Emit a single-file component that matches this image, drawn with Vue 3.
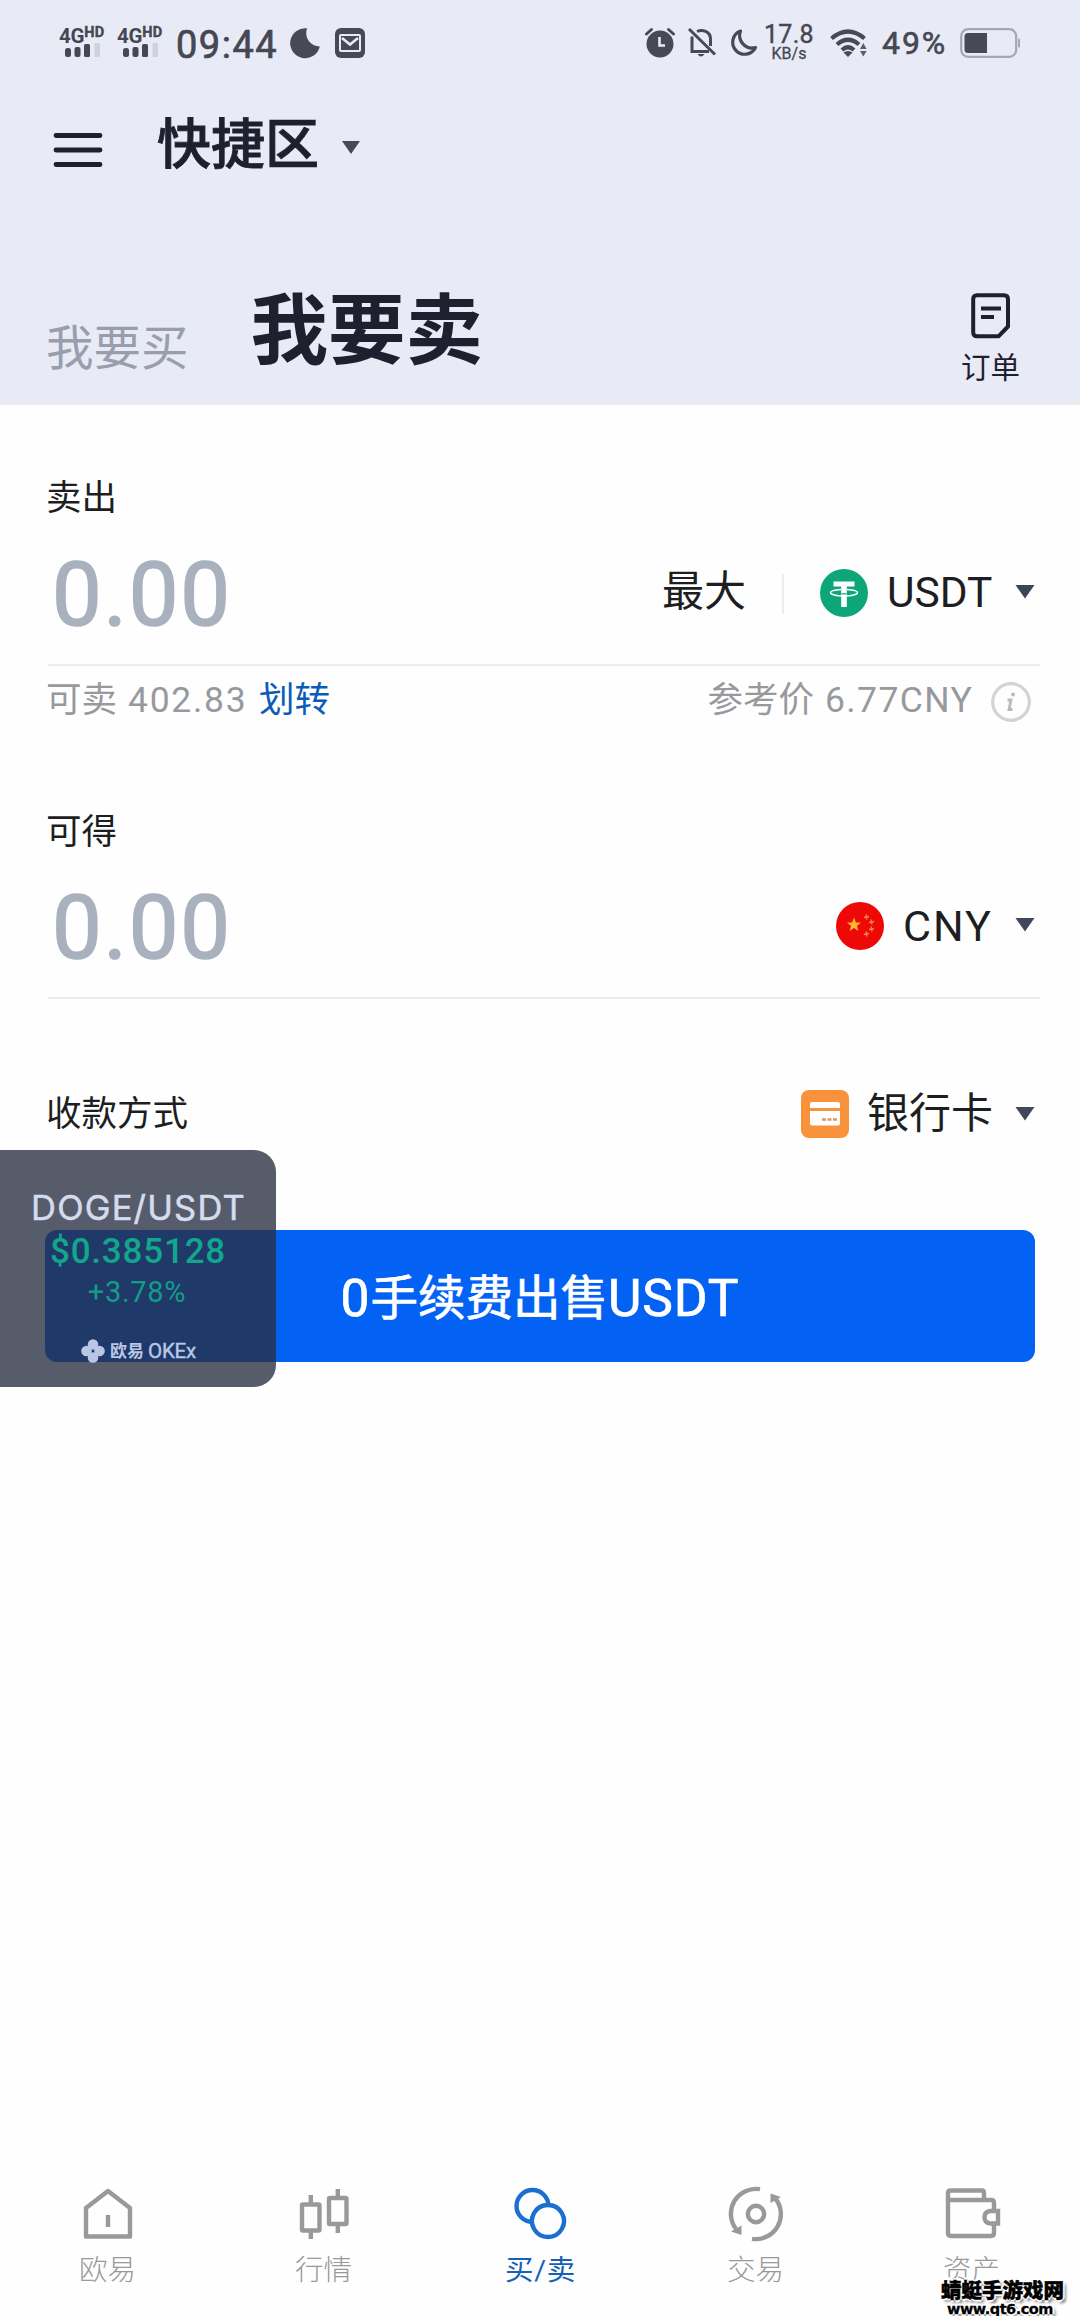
<script setup>
const sims = [1, 2]
const tabs = [
  { id: 'home', label: '欧易' },
  { id: 'market', label: '行情' },
  { id: 'otc', label: '买/卖', active: true },
  { id: 'trade', label: '交易' },
  { id: 'assets', label: '资产' },
]
const petals = [[12, 5.5], [5.5, 12], [18.5, 12], [12, 18.5]]
</script>

<template>
  <div class="screen">
    <header class="header">
      <div class="status">
        <div v-for="s in sims" :key="s" class="sim">
          <div class="net"><b>4G</b><i>HD</i></div>
          <svg width="36" height="15" viewBox="0 0 36 15">
            <rect x="0" y="5" width="6" height="9" rx="2.5" fill="#454752" />
            <rect x="9.5" y="4" width="6" height="10" rx="2" fill="#454752" />
            <rect x="19" y="1" width="6" height="13" rx="1.5" fill="#454752" />
            <rect x="29.500" y="0" width="5.500" height="14" rx="1" fill="#cfd1db" />
          </svg>
        </div>
        <span class="time">09:44</span>
        <svg class="s-moon" width="30" height="30" viewBox="0 0 30 30">
          <path d="M17 0.300A13.500 13.500 0 0 0 29.800 18.500A15 15 0 1 1 17 0.300Z" fill="#474955" />
        </svg>
        <svg class="s-mail" width="30" height="30" viewBox="0 0 30 30">
          <rect width="30" height="30" rx="6" fill="#474955" />
          <rect x="5" y="7" width="20" height="16" rx="1" fill="none" stroke="#e8ebf6" stroke-width="2" />
          <path d="M7 10l8 6.500L23 10" fill="none" stroke="#e8ebf6" stroke-width="2.600" />
        </svg>
        <span class="grow"></span>
        <svg width="30" height="30" viewBox="0 0 30 30">
          <circle cx="15" cy="16" r="13.500" fill="#474955" />
          <path d="M1.500 6L6.500 1.500M28.500 6L23.500 1.500" stroke="#474955" stroke-width="3" stroke-linecap="round" />
          <path d="M14.500 9v8.500h5.500" fill="none" stroke="#e8ebf6" stroke-width="2.600" />
        </svg>
        <svg class="s-bell" width="28" height="30" viewBox="0 0 28 30">
          <path d="M4 8.500V23.500H21M9 3.500C14 1 22.500 3 22.500 11V18M1 1L27 26.500" fill="none" stroke="#474955" stroke-width="3" />
          <path d="M9.500 26h7q-3.500 5-7 0Z" fill="#474955" />
        </svg>
        <svg class="s-moon2" width="29" height="28" viewBox="0 0 29 28">
          <path d="M11.500 2A12 12 0 1 0 26.500 18.500A12.500 12.500 0 0 1 11.500 2Z" fill="none" stroke="#474955" stroke-width="3.200" stroke-linejoin="round" />
        </svg>
        <div class="speed"><span>17.8</span><small>KB/s</small></div>
        <svg class="s-wifi" width="38" height="28" viewBox="0 0 38 28">
          <g fill="none" stroke="#474955" stroke-width="4.200">
            <path d="M1.500 9.500Q18 -4.500 34.500 9.500" />
            <path d="M7 15.500Q18 6 29 15.500" />
            <path d="M12 21Q18 15.500 24 21" />
          </g>
          <path d="M13.500 23.500Q18 20.500 22.500 23.500L18 28Z" fill="#474955" />
          <path d="M30 20l3.300-6 3.300 6ZM30 22l3.300 5.500 3.300-5.500Z" fill="#5b5d68" />
        </svg>
        <span class="percent">49%</span>
        <svg class="s-batt" width="60" height="30" viewBox="0 0 60 30">
          <rect x="1.200" y="1.200" width="55" height="27.600" rx="7" fill="none" stroke="#a4a6b0" stroke-width="2.200" />
          <path d="M8 5H27V25H8Q4.500 25 4.500 21.500V8.500Q4.500 5 8 5Z" fill="#474955" />
          <rect x="58" y="10.500" width="2" height="9" rx="1" fill="#a4a6b0" />
        </svg>
      </div>

      <div class="title-row">
        <svg width="48" height="36" viewBox="0 0 48 36">
          <path d="M2 3.500H46M2 18H46M2 32.500H46" stroke="#1e2030" stroke-width="4.800" stroke-linecap="round" />
        </svg>
        <h1>快捷区</h1>
        <svg width="20" height="15" viewBox="0 0 20 15"><path d="M1 1h18l-9 13Z" fill="#454959" /></svg>
      </div>

      <div class="sides">
        <span class="buy">我要买</span>
        <span class="sell">我要卖</span>
        <span class="grow"></span>
        <div class="orders">
          <svg width="40" height="46" viewBox="0 0 40 46">
            <path d="M6 2.200H33Q37 2.200 37 6.200V33.500L27.500 43.300H6Q2.200 43.300 2.200 39.500V6Q2.200 2.200 6 2.200Z" fill="none" stroke="#1e2030" stroke-width="4" stroke-linejoin="round" />
            <path d="M10 15.500H30M10 24H23" stroke="#1e2030" stroke-width="4" />
          </svg>
          <span>订单</span>
        </div>
      </div>
    </header>

    <main class="form">
      <div class="label first">卖出</div>
      <div class="amount">
        <span class="value">0.00</span>
        <span class="max">最大</span>
        <span class="bar"></span>
        <svg class="coin" width="48" height="48" viewBox="0 0 48 48">
          <circle cx="24" cy="24" r="24" fill="#0ca678" />
          <path d="M13.500 12.500h21v5h-7.700V38h-5.600V17.500h-7.700Z" fill="#fff" />
          <path d="M21 20.500C13 21 10.500 22.300 10.500 23.600C10.500 25.500 16 27 24 27S37.500 25.500 37.500 23.600C37.500 22.300 35 21 27 20.500" fill="none" stroke="#fff" stroke-width="1.500" />
          <path d="M21.500 24.800h5" stroke="#0ca678" stroke-width="1.200" />
        </svg>
        <span class="code usdt">USDT</span>
        <svg class="caret" width="20" height="15" viewBox="0 0 20 15"><path d="M0.500 1h19l-9.500 13.500Z" fill="#3b4654" /></svg>
      </div>
      <div class="hint">
        <span>可卖</span>
        <span class="num">402.83</span>
        <a>划转</a>
        <span class="grow"></span>
        <span>参考价</span>
        <span class="num price">6.77CNY</span>
        <svg width="40" height="40" viewBox="0 0 40 40">
          <circle cx="20" cy="20" r="18.300" fill="none" stroke="#d3d3d6" stroke-width="3.200" />
          <path d="M16.500 18h3.500l-2 9.500h3.500" fill="none" stroke="#b9babd" stroke-width="2.800" />
          <circle cx="22" cy="12.500" r="2" fill="#b9babd" />
        </svg>
      </div>

      <div class="label second">可得</div>
      <div class="amount">
        <span class="value">0.00</span>
        <svg class="coin" width="48" height="48" viewBox="0 0 48 48">
          <circle cx="24" cy="24" r="24" fill="#ee0808" />
          <path d="M18 15.500l1.900 4.900 5.100.2-4 3.300 1.400 5-4.400-2.900-4.400 2.900 1.400-5-4-3.300 5.100-.2Z" fill="#fdb52c" />
          <g fill="none" stroke="#f8894a" stroke-width="1.300">
            <path d="M28 15.500l5-1M30 12.500l1 5M33 20.500l5-1M35 17.500l1 5M33 27.500l5-1M35 24.500l1 5M28 32.500l5-1M30 29.500l1 5" />
          </g>
        </svg>
        <span class="code cny">CNY</span>
        <svg class="caret" width="20" height="15" viewBox="0 0 20 15"><path d="M0.500 1h19l-9.500 13.500Z" fill="#42475b" /></svg>
      </div>

      <div class="method">
        <span class="label">收款方式</span>
        <span class="grow"></span>
        <svg width="48" height="48" viewBox="0 0 48 48">
          <rect width="48" height="48" rx="8" fill="#f8933c" />
          <path d="M11 12H37Q39 12 39 14V18H9V14Q9 12 11 12ZM9 21H39V33.500Q39 35.500 37 35.500H11Q9 35.500 9 33.500Z" fill="#fff" />
          <path d="M21 29.500h4M26.500 29.500h4M32 29.500h4" stroke="#e8935a" stroke-width="2.600" />
        </svg>
        <span class="bank">银行卡</span>
        <svg class="caret" width="20" height="15" viewBox="0 0 20 15"><path d="M0.500 1h19l-9.500 13.500Z" fill="#42475b" /></svg>
      </div>

      <button class="submit"><span class="lat">0</span><span>手续费出售</span><span class="lat">USDT</span></button>
    </main>

    <nav class="nav">
      <div v-for="t in tabs" :key="t.id" class="item" :class="{ active: t.active }">
        <svg width="56" height="56" viewBox="0 0 56 56" fill="none" stroke="currentColor" stroke-width="4.400">
          <template v-if="t.id === 'home'">
            <path d="M6 23L28 6L50 23V51.500H6Z" stroke-linejoin="round" />
            <path d="M28 30v12" />
          </template>
          <template v-else-if="t.id === 'market'">
            <rect x="6" y="19.500" width="17.500" height="26" rx="1" />
            <path d="M14.800 10v9M14.800 45v9M41.800 4v9M41.800 39v9" />
            <rect x="33" y="13" width="17.500" height="26" rx="1" />
          </template>
          <template v-else-if="t.id === 'otc'">
            <circle cx="20.500" cy="21" r="16" />
            <path d="M36 20A16 16 0 1 1 35.900 20Z" fill="#fefefe" />
          </template>
          <template v-else-if="t.id === 'trade'">
            <circle cx="28" cy="29" r="8.200" />
            <path d="M32 4.200A25 25 0 0 0 8 44M24 53.800A25 25 0 0 0 47 13" />
            <path d="M3 46.500l10.500-6v9.500ZM42.500 8.500l10.500 3.500-10.500 6Z" fill="currentColor" stroke="none" />
          </template>
          <template v-else>
            <path d="M4 13V8Q4 5.500 6.500 5.500H38Q40 5.500 40 8V14M4 10V48Q4 51 7 51H47Q50 51 50 48V40M50 25V18Q50 15 47 15H4" />
            <path d="M54 26H46Q40.500 27 40.500 32.300T46 38.500H54Z" />
          </template>
        </svg>
        <span>{{ t.label }}</span>
      </div>
    </nav>

    <aside class="ticker">
      <div class="pair">DOGE/USDT</div>
      <div class="quote">$0.385128</div>
      <div class="change">+3.78%</div>
      <div class="brand">
        <svg width="24" height="24" viewBox="0 0 24 24">
          <circle v-for="(p, i) in petals" :key="i" :cx="p[0]" :cy="p[1]" r="5.300" fill="#b9c6e6" />
        </svg>
        <b>欧易</b><span>OKEx</span>
      </div>
    </aside>

    <div class="site">
      <div class="site-name">蜻蜓手游戏网</div>
      <div class="site-url">www.qt6.com</div>
    </div>
  </div>
</template>

<style>
body { margin: 0; background: #fefefe; }
</style>

<style scoped>
.screen {
  position: relative;
  display: flex;
  flex-direction: column;
  width: 1080px;
  height: 2316px;
  overflow: hidden;
  background: #fefefe;
  color: #1d1e22;
  font-family: Roboto, "Noto Sans CJK SC", sans-serif;
  white-space: nowrap;
}
svg { display: block; flex: none; overflow: visible; }
.grow { flex: 1; }
.header { height: 402px; background: #e8ebf6; border-bottom: 3px solid #e9edef; }

.status { display: flex; align-items: center; height: 85px; padding: 0 60px 0 59px; color: #454752; }
.sim { width: 58px; height: 32px; }
.sim svg { margin: 0 0 0 6px; }
.net { display: flex; align-items: flex-start; height: 16px; line-height: 18px; }
.net b { font-size: 20.500px; letter-spacing: -0.300px; }
.net i { font: 700 14.500px/12px Roboto, sans-serif; letter-spacing: 0.300px; -webkit-text-stroke: 0.400px; }
.time { width: 115px; padding: 4px 0 0 1px; font-size: 38px; line-height: 44px; letter-spacing: 1.500px; box-sizing: border-box; -webkit-text-stroke: 0.700px; }
.s-mail { margin-left: 15px; }
.s-bell { margin-left: 13px; }
.s-moon2 { margin-left: 13px; }
.speed { display: flex; flex-direction: column; align-items: center; width: 52px; height: 42px; margin-left: 5px; }
.speed span { font-size: 25px; line-height: 26px; letter-spacing: 0.300px; -webkit-text-stroke: 0.400px; }
.speed small { margin-top: -2px; font-size: 16px; line-height: 16px; -webkit-text-stroke: 0.300px; }
.s-wifi { margin-left: 15px; }
.percent { margin-left: 14px; width: 78px; font-size: 32px; line-height: 36px; letter-spacing: 1.900px; padding-top: 1px; -webkit-text-stroke: 0.600px; }

.title-row { display: flex; align-items: center; height: 120px; padding: 10px 0 0 54px; box-sizing: border-box; }
.title-row h1 { margin: -8px 0 0 55px; width: 184px; color: #1e2030; font-size: 54px; line-height: 70px; font-weight: 500; -webkit-text-stroke: 0.900px; }
.title-row svg + h1 + svg { margin-top: -5px; }

.sides { display: flex; align-items: flex-start; height: 197px; padding: 0 60px 0 46px; }
.buy { margin-top: 114px; font-size: 47.500px; line-height: 60px; color: #9a9eac; }
.sell { margin: 77px 0 0 62px; font-size: 77.500px; line-height: 100px; font-weight: 700; color: #1e2030; }
.orders { display: flex; flex-direction: column; align-items: center; margin-top: 88px; color: #1e2030; font-size: 29.500px; line-height: 40px; }
.orders span { margin-top: 9px; margin-left: -1px; }

.label { font-size: 35.500px; line-height: 60px; }
.form > .label { height: 60px; padding-left: 46px; }
.first { margin-top: 63px; }
.second { position: relative; margin-top: 71px; margin-bottom: -1px; }
.amount { display: flex; align-items: center; height: 131px; padding: 0 0 6px 52px; margin: 0 40px 0 0; position: relative; }
.amount::after { content: ""; position: absolute; left: 48px; right: 0; bottom: -1px; height: 2px; background: #ececf0; }
.value { flex: 1; margin-top: 3px; color: #a9b1bf; font-size: 88.500px; line-height: 110px; letter-spacing: 1.800px; -webkit-text-stroke: 1.600px; }
.max { margin-top: -3px; font-size: 42px; line-height: 60px; }
.bar { width: 2px; height: 40px; margin: 0 36px; background: #ededf0; }
.coin { margin-top: -2px; }
.code { margin: -1px 0 0 19px; font-size: 42.500px; line-height: 56px; }
.usdt { width: 107px; }
.cny { width: 91px; font-size: 43px; letter-spacing: 2px; }
.caret { margin: -5px 5px 0 21px; }
.hint { display: flex; align-items: center; height: 66px; padding: 2px 49px 0 46px; margin-bottom: -2px; color: #97999d; font-size: 35.500px; line-height: 60px; }
.num { margin-left: 11px; width: 120px; letter-spacing: 1.700px; }
.price { width: 149px; letter-spacing: 1.400px; }
.hint a { margin-left: 11px; color: #0b5cb8; }
.hint svg { margin: 4px 0 0 17px; }
.method { display: flex; align-items: center; height: 80px; margin-top: 76px; padding: 0 40px 0 46px; }
.method .caret { margin-top: -2px; }
.bank { margin-left: 18px; font-size: 42px; line-height: 60px; margin-right: 1px; }
.submit {
  display: flex; align-items: center; justify-content: center;
  width: 990px; height: 132px; margin: 76px 0 0 45px; padding: 6px 0 0 0;
  border: 0; border-radius: 12px; background: #0362f3; color: #fff;
  font: 400 47.500px/80px Roboto, "Noto Sans CJK SC", sans-serif;
  -webkit-text-stroke: 0.700px;
}
.lat { font-size: 51.500px; letter-spacing: 0.900px; }

.nav { display: flex; margin-top: auto; height: 160px; }
.item { display: flex; flex-direction: column; align-items: center; width: 216px; padding-top: 29px; color: #98999b; font-size: 28.500px; line-height: 40px; }
.item span { margin: 10px 0 0 -1px; font-weight: 300; }
.item.active { color: #1a6fd0; }
.item.active span { color: #1560b8; font-weight: 400; letter-spacing: 0.700px; margin-left: 1px; }

.ticker {
  position: absolute; left: 0; top: 1150px; width: 276px; height: 237px;
  border-radius: 0 22px 22px 0; background: rgba(40, 46, 65, 0.78);
  display: flex; flex-direction: column; align-items: center; text-align: center;
}
.pair { margin: 38px 0 0 1px; font: 400 34.500px/40px Inter, sans-serif; color: #d5dcf0; letter-spacing: 1.200px; -webkit-text-stroke: 0.500px; }
.quote { margin-top: 4px; font-size: 35px; line-height: 40px; font-weight: 500; letter-spacing: 0.800px; color: #12a68c; }
.change { margin-top: 3px; margin-left: -2px; font-size: 29px; line-height: 34px; letter-spacing: 0.700px; color: #149c88; }
.brand { display: flex; align-items: center; margin: 30px 0 0 1px; color: #b9c6e6; line-height: 24px; }
.brand b { margin-left: 5px; font-size: 17px; }
.brand span { margin-left: 4px; font-size: 20.500px; -webkit-text-stroke: 0.400px; letter-spacing: -0.200px; }

.site { position: absolute; left: 941px; top: 2280px; color: #000; text-shadow: 2px 0 #fff, -2px 0 #fff, 0 2px #fff, 0 -2px #fff, 3px 3px 3px #777; }
.site-name { font-size: 20.500px; line-height: 23px; font-weight: 900; -webkit-text-stroke: 0.500px #000; }
.site-url { margin: -1px 0 0 6px; font: 700 14.500px/15px "DejaVu Sans", sans-serif; letter-spacing: -0.500px; -webkit-text-stroke: 0.300px #000; }
</style>
